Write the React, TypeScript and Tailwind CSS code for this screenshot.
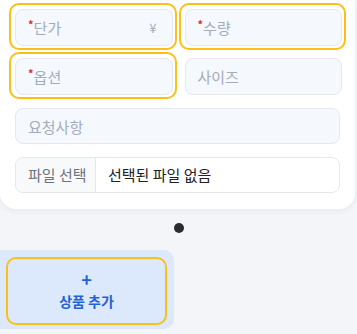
const font = { fontFamily: '"Noto Sans CJK KR", "Noto Sans", sans-serif' };

type FieldProps = {
  label: string;
  required?: boolean;
  suffix?: string;
  className?: string;
};

const Field = ({ label, required, suffix, className = "h-[37px]" }: FieldProps) => (
  <div
    className={`flex items-center justify-between rounded-lg border border-[#e3e8ef] bg-[#f5f8fd] px-3 ${className}`}
  >
    <span className="flex items-start text-[15px] leading-none text-[#a3acb9]">
      {required && (
        <span className="-mt-[1px] text-[11px] font-bold leading-none text-[#e02b2b]">*</span>
      )}
      {label}
    </span>
    {suffix && <span className="mr-[3px] text-[13px] text-[#a3acb9]">{suffix}</span>}
  </div>
);

// yellow highlight box round a grid cell
const Cell = ({ active, children }: { active?: boolean; children: React.ReactNode }) => (
  <div
    className={`rounded-[10px] border-2 pt-1 pb-[2px] pl-1 pr-[2px] ${
      active ? "border-[#fbbf16]" : "border-transparent"
    }`}
  >
    {children}
  </div>
);

export default function App() {
  return (
    <div className="h-[334px] w-[357px] overflow-hidden bg-[#f3f5f9]" style={font}>
      {/* Product form card */}
      <div className="w-[355px] rounded-b-2xl bg-white px-[9px] pt-[3px] pb-4 shadow-[0_2px_6px_rgba(30,40,70,0.06)]">
        <div className="grid grid-cols-2 gap-x-[2px] gap-y-[2px]">
          <Cell active>
            <Field label="단가" required suffix="¥" />
          </Cell>
          <Cell active>
            <Field label="수량" required />
          </Cell>
          <Cell active>
            <Field label="옵션" required />
          </Cell>
          <Cell>
            <Field label="사이즈" />
          </Cell>
        </div>

        <div className="mx-[6px] mt-[9px] flex flex-col gap-[13px]">
          <Field label="요청사항" className="h-[36px]" />

          {/* File picker */}
          <div className="flex h-[36px] overflow-hidden rounded-lg border border-[#e3e8ef] bg-white text-[15px]">
            <div className="flex w-[80px] items-center border-r border-[#e3e8ef] bg-[#f8f9fb] pl-3 text-[#6b7280]">
              파일 선택
            </div>
            <div className="flex items-center pl-3 text-[#222]">선택된 파일 없음</div>
          </div>
        </div>
      </div>

      {/* Pager dot */}
      <div className="flex justify-center pt-[14px]">
        <span className="h-[10px] w-[10px] rounded-full bg-[#2b2b2b]" />
      </div>

      {/* Add product */}
      <div className="mt-[17px] flex items-start justify-between">
        <div className="h-[79px] w-[174px] rounded-r-[10px] bg-[#dce8fb] pt-[7px] pb-1 pl-[6px] pr-[7px]">
          <button className="flex h-[68px] w-full flex-col items-center justify-center gap-[9px] rounded-[10px] border-2 border-[#fbbf16] pb-[2px] text-[#1f63d6]">
            <span className="text-[18px] font-bold leading-[12px]">+</span>
            <span className="text-[14px] font-bold leading-none">상품 추가</span>
          </button>
        </div>
        <div className="h-[84px] w-[76px] rounded-l-xl bg-[#f4f5f9]" />
      </div>
    </div>
  );
}
